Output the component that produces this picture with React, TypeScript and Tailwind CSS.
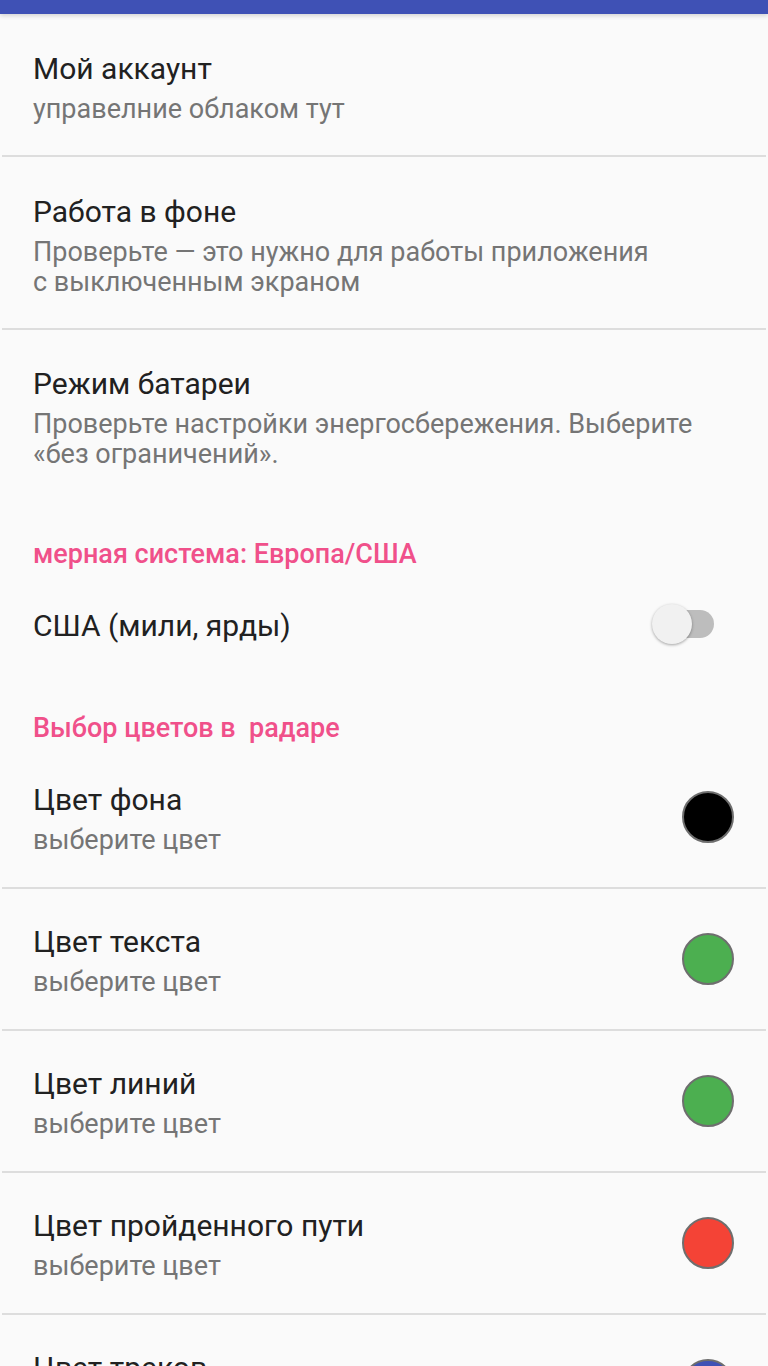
import { ReactNode } from 'react';

const font = { fontFamily: 'Roboto, "Noto Sans", sans-serif' };

type Pref = {
    title: string;
    summary?: ReactNode;
    color?: string;
    pad?: string;
};

const topPrefs: Pref[] = [
    { title: 'Мой аккаунт', summary: 'управелние облаком тут', pad: 'pt-[36px] pb-[31px]' },
    {
        title: 'Работа в фоне',
        summary: (
            <>
                Проверьте — это нужно для работы приложения
                <br />с выключенным экраном
            </>
        ),
        pad: 'pt-[36px] pb-[31px]',
    },
];

const colorPrefs: Pref[] = [
    { title: 'Цвет фона', summary: 'выберите цвет', color: 'bg-black' },
    { title: 'Цвет текста', summary: 'выберите цвет', color: 'bg-[#4caf50]' },
    { title: 'Цвет линий', summary: 'выберите цвет', color: 'bg-[#4caf50]' },
    { title: 'Цвет пройденного пути', summary: 'выберите цвет', color: 'bg-[#f44336]' },
    { title: 'Цвет треков', summary: 'выберите цвет', color: 'bg-[#3f51b5]' },
];

function Divider() {
    return <div className="mx-[2px] h-[2px] bg-[#dddddd]" />;
}

function PrefRow({ title, summary, color, pad = 'pt-[34px] pb-[32px]' }: Pref) {
    return (
        <div className="flex items-center pl-[33px] pr-[34px]">
            <div className={`flex-1 ${pad}`}>
                <div className="text-[30px] leading-[38px] text-[#212121]">{title}</div>
                {summary && (
                    <div className="mt-[6px] max-w-[680px] text-[27px] leading-[30px] text-[#757575]">{summary}</div>
                )}
            </div>
            {color && <div className={`h-[52px] w-[52px] rounded-full border-2 border-[#6e6e6e] ${color}`} />}
        </div>
    );
}

function Category({ label, pad }: { label: string; pad: string }) {
    return (
        <div className={`whitespace-pre pl-[33px] ${pad} text-[27px] font-medium leading-[32px] text-[#f0508a]`}>
            {label}
        </div>
    );
}

export default function App() {
    return (
        <div className="h-[1366px] overflow-hidden bg-[#fafafa]" style={font}>
            <div className="h-[14px] bg-[#3f51b5] shadow-[0_2px_4px_rgba(0,0,0,0.15)]" />

            {topPrefs.map((p) => (
                <div key={p.title}>
                    <PrefRow {...p} />
                    <Divider />
                </div>
            ))}
            <PrefRow
                title="Режим батареи"
                summary="Проверьте настройки энергосбережения. Выберите «без ограничений»."
                pad="pt-[35px] pb-[31px]"
            />

            <Category label="мерная система: Европа/США" pad="pt-[38px]" />

            <div className="flex items-center pl-[33px] pr-[54px] pt-[37px] pb-[40px]">
                <div className="flex-1 text-[30px] leading-[38px] text-[#212121]">США (мили, ярды)</div>
                {/* switch, off */}
                <div className="relative mb-[4px] h-[28px] w-[56px]">
                    <div className="absolute right-0 top-0 h-[28px] w-[48px] rounded-full bg-[#bdbdbd]" />
                    <div className="absolute left-[-6px] top-[-6px] h-[40px] w-[40px] rounded-full bg-[#f1f1f1] shadow-[0_1px_3px_rgba(0,0,0,0.35)]" />
                </div>
            </div>

            <Category label="Выбор цветов в  радаре" pad="pt-[27px] pb-[3px]" />

            {colorPrefs.map((p) => (
                <div key={p.title}>
                    <PrefRow {...p} />
                    <Divider />
                </div>
            ))}
        </div>
    );
}
